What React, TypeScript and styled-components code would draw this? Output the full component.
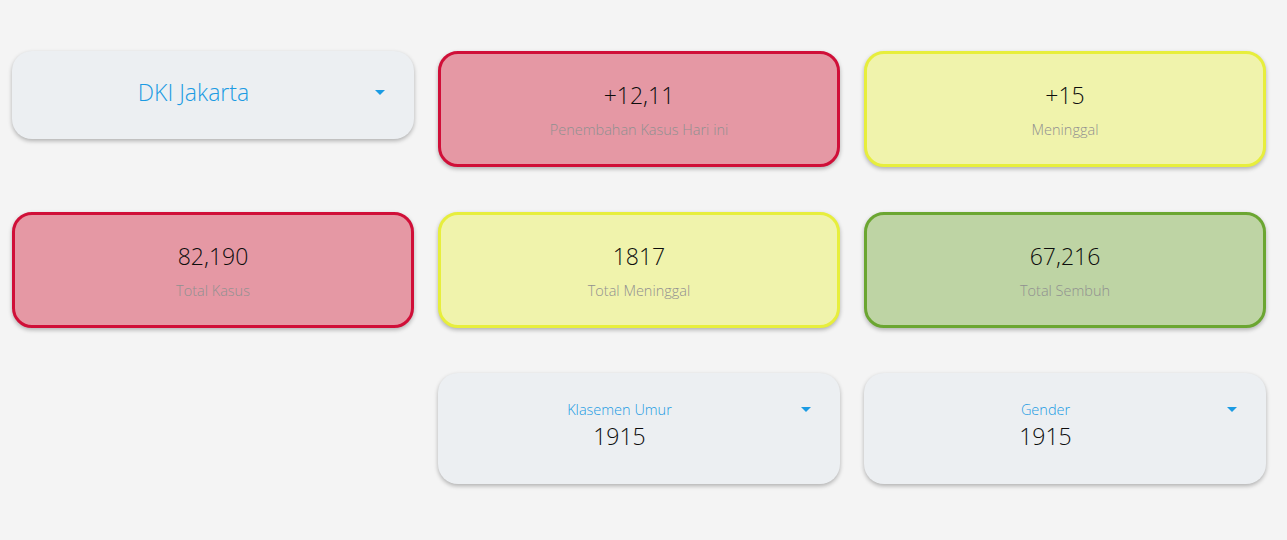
import React from "react";
import styled, { createGlobalStyle } from "styled-components";

const GlobalStyle = createGlobalStyle`
  html, body { margin: 0; padding: 0; background: #f4f4f4; }
  body { font-family: "Open Sans", "Noto Sans", sans-serif; font-weight: 300; }
`;

const Page = styled.div`
  display: grid;
  grid-template-columns: repeat(3, 402px);
  column-gap: 24px;
  row-gap: 45px;
  padding: 51px 21px 40px 12px;
  align-items: start;
`;

type Tone = "red" | "yellow" | "green";

const tones: Record<Tone, { bg: string; border: string }> = {
  red: { bg: "#e598a4", border: "#d00f38" },
  yellow: { bg: "#f0f3ac", border: "#e7ee3c" },
  green: { bg: "#bed4a4", border: "#6ba631" },
};

const StatCard = styled.div<{ $tone: Tone }>`
  box-sizing: border-box;
  height: 116px;
  border-radius: 20px;
  border: 3px solid ${(p) => tones[p.$tone].border};
  background: ${(p) => tones[p.$tone].bg};
  box-shadow: 0 2px 4px rgba(0, 0, 0, 0.28);
  display: flex;
  flex-direction: column;
  align-items: center;
  justify-content: center;
  gap: 9px;
  padding-top: 1px;
`;

const Value = styled.div`
  font-size: 23px;
  line-height: 32px;
  color: #0d0d0d;
`;

const Label = styled.div`
  font-size: 14.5px;
  line-height: 20px;
  color: #909090;
`;

const SelectCard = styled.div<{ $tall?: boolean }>`
  box-sizing: border-box;
  height: ${(p) => (p.$tall ? "111px" : "88px")};
  border-radius: 20px;
  background: #eceff2;
  box-shadow: 0 2px 4px rgba(0, 0, 0, 0.28);
  display: flex;
  align-items: ${(p) => (p.$tall ? "flex-start" : "center")};
  padding: 0 29px 0 0;
`;

const SelectContent = styled.div<{ $tall?: boolean }>`
  flex: 1;
  height: 100%;
  display: flex;
  flex-direction: column;
  align-items: center;
  justify-content: center;
  gap: ${(p) => (p.$tall ? "0" : "0")};
  padding-bottom: ${(p) => (p.$tall ? "6px" : "6px")};
  box-sizing: border-box;
`;

const Region = styled.div`
  font-size: 23px;
  line-height: 32px;
  color: #1b9be3;
`;

const SelectLabel = styled.div`
  font-size: 14.5px;
  line-height: 20px;
  color: #1b9be3;
`;

const SelectValue = styled.div`
  font-size: 23px;
  line-height: 32px;
  color: #0d0d0d;
`;

const Arrow = styled.div<{ $top?: number }>`
  width: 0;
  height: 0;
  border-left: 5.5px solid transparent;
  border-right: 5.5px solid transparent;
  border-top: 5.5px solid #1b9be3;
  margin-top: ${(p) => (p.$top ? `${p.$top}px` : "0")};
  align-self: ${(p) => (p.$top ? "flex-start" : "center")};
  position: relative;
  top: ${(p) => (p.$top ? "0" : "-3px")};
`;

const Empty = styled.div``;

function Stat({ tone, value, label }: { tone: Tone; value: string; label: string }) {
  return (
    <StatCard $tone={tone}>
      <Value>{value}</Value>
      <Label>{label}</Label>
    </StatCard>
  );
}

function Dropdown({ label, value }: { label: string; value: string }) {
  return (
    <SelectCard $tall>
      <SelectContent $tall>
        <SelectLabel>{label}</SelectLabel>
        <SelectValue>{value}</SelectValue>
      </SelectContent>
      <Arrow $top={34} />
    </SelectCard>
  );
}

export default function App() {
  return (
    <>
      <GlobalStyle />
      <Page>
        <SelectCard>
          <SelectContent>
            <Region>DKI Jakarta</Region>
          </SelectContent>
          <Arrow />
        </SelectCard>
        <Stat tone="red" value="+12,11" label="Penembahan Kasus Hari ini" />
        <Stat tone="yellow" value="+15" label="Meninggal" />
        <Stat tone="red" value="82,190" label="Total Kasus" />
        <Stat tone="yellow" value="1817" label="Total Meninggal" />
        <Stat tone="green" value="67,216" label="Total Sembuh" />
        <Empty />
        <Dropdown label="Klasemen Umur" value="1915" />
        <Dropdown label="Gender" value="1915" />
      </Page>
    </>
  );
}
